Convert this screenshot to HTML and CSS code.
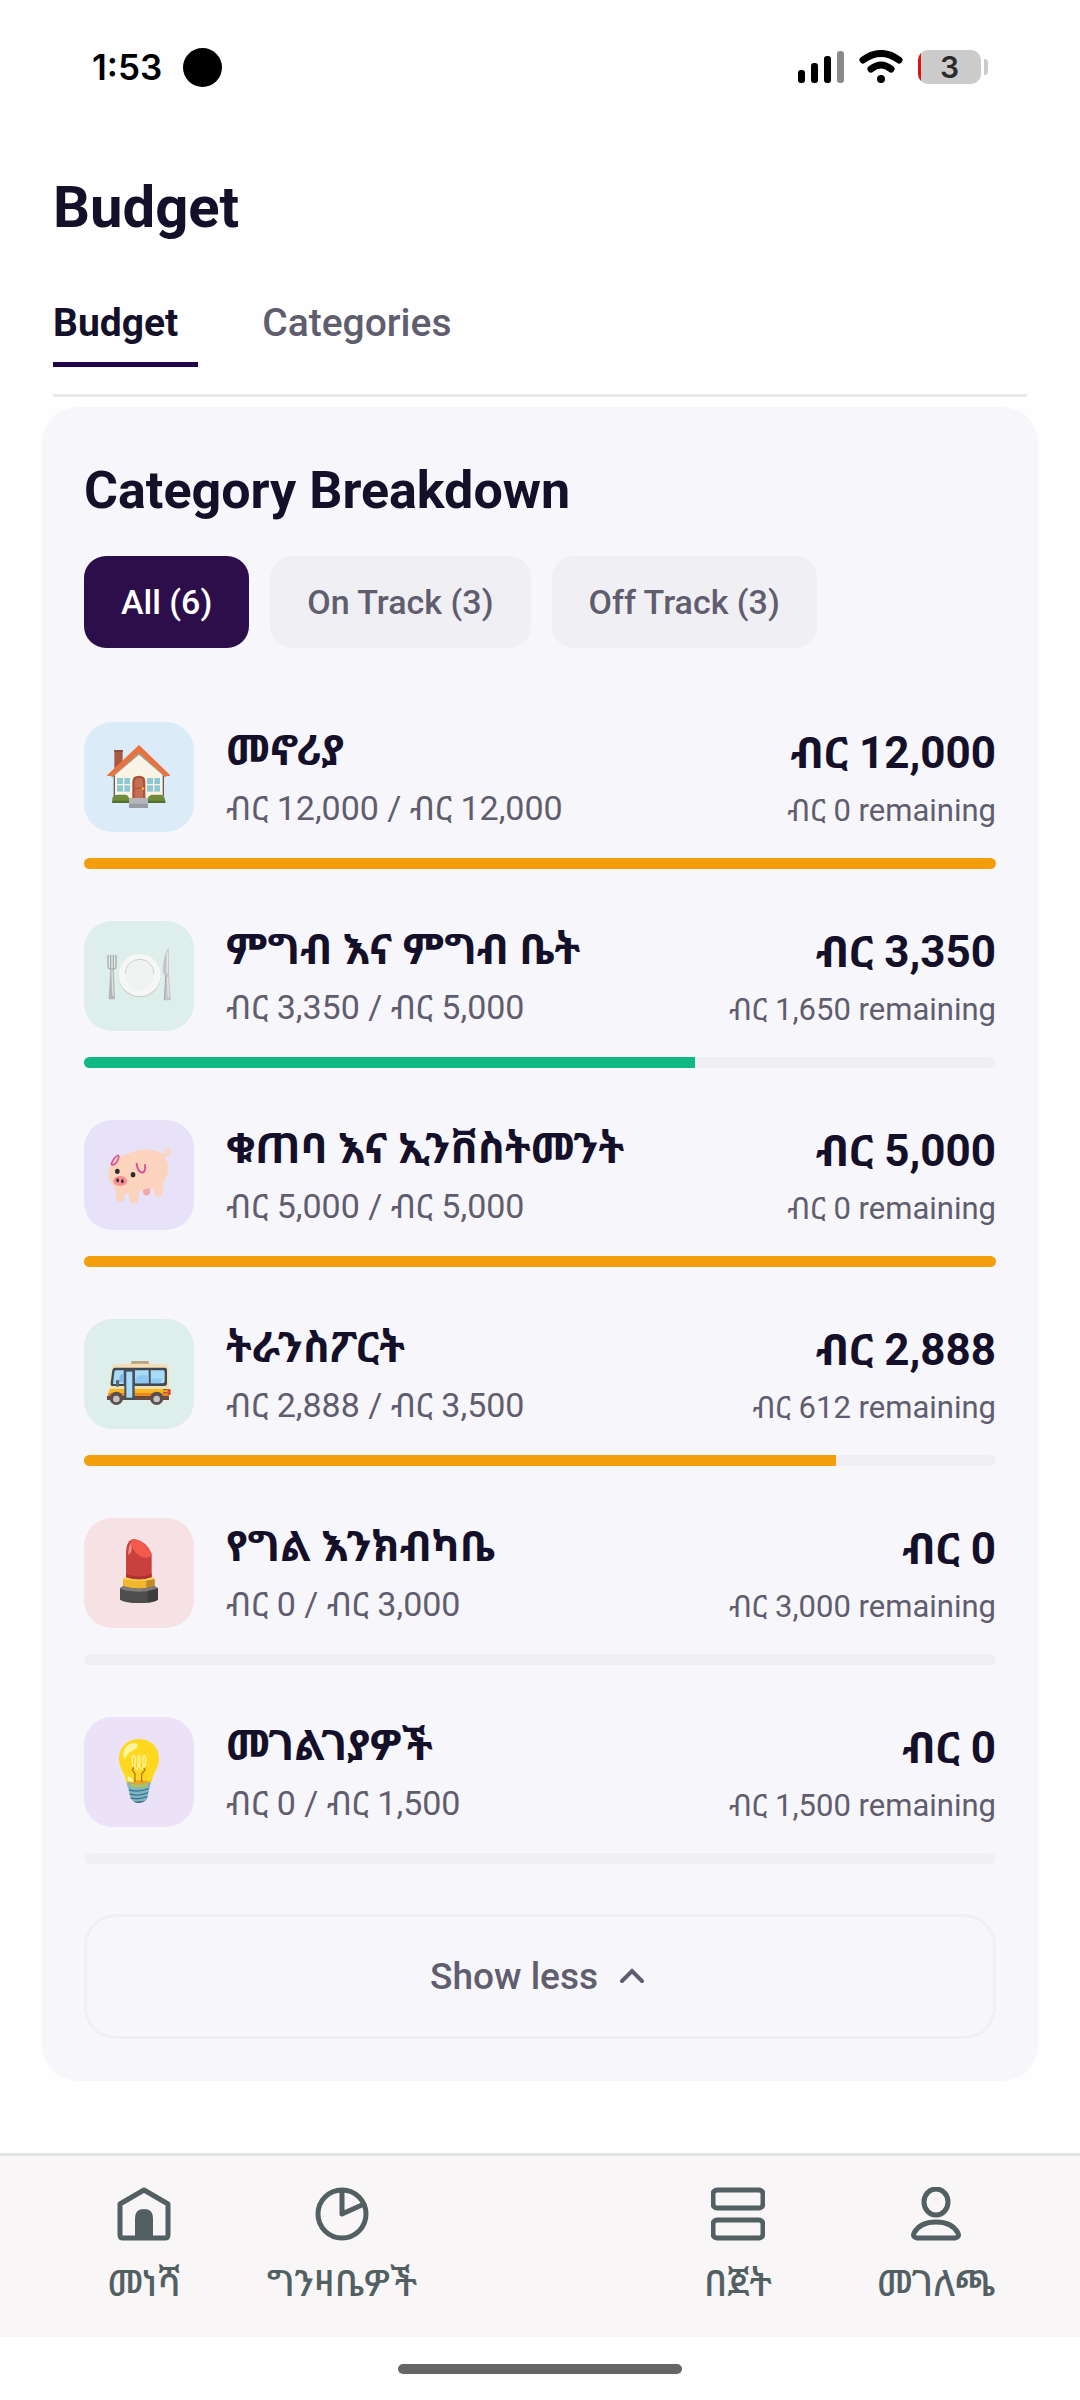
FILE: index.html
```html
<!DOCTYPE html>
<html lang="am">
<head>
<meta charset="UTF-8">
<meta name="viewport" content="width=device-width, initial-scale=1.0">
<title>Budget</title>
<link rel="stylesheet" href="styles.css">
</head>
<body>
<div class="status-bar">
  <div class="status-left">
    <span class="clock">1:53</span>
    <span class="camera"></span>
  </div>
  <div class="status-right">
    <svg class="signal" viewBox="0 0 46 34" aria-hidden="true">
      <rect x="0" y="20" width="7" height="13" rx="3"/>
      <rect x="13" y="13" width="7" height="20" rx="3"/>
      <rect x="26" y="6" width="7" height="27" rx="3"/>
      <rect x="39" y="1" width="7" height="32" rx="3" fill="#8a8a8a"/>
    </svg>
    <svg class="wifi" viewBox="0 0 44 34" aria-hidden="true">
      <path d="M4 10Q22 -3 40 10M12 19Q22 11 32 19" fill="none" stroke="#000" stroke-width="7" stroke-linecap="round"/>
      <circle cx="22" cy="29" r="4"/>
    </svg>
    <div class="battery"><span class="battery-level">3</span></div>
  </div>
</div>

<header class="page-header">
  <h1>Budget</h1>
  <nav class="tabs">
    <a class="tab active" href="#budget">Budget</a>
    <a class="tab" href="#categories">Categories</a>
  </nav>
</header>

<main class="card">
  <h2>Category Breakdown</h2>
  <div class="filters">
    <button class="chip active">All (6)</button>
    <button class="chip">On Track (3)</button>
    <button class="chip">Off Track (3)</button>
  </div>

  <ul class="category-list">
    <li class="category">
      <div class="category-row">
        <div class="tile blue">
          <svg viewBox="0 0 216 216" aria-hidden="true">
            <rect x="34" y="27" width="25" height="56" fill="#a75a41"/>
            <rect x="34" y="27" width="25" height="6" fill="#8f4a36"/>
            <path d="M34 90L108 22L181 90V177H34Z" fill="#faf4e6"/>
            <path d="M34 100V165M181 100V165" stroke="#6b5a52" stroke-width="4"/>
            <path d="M24 105L108 34L191 105" fill="none" stroke="#a89a88" stroke-width="11"/>
            <path d="M108 12L13 102V105H30L108 34L186 105H201V102Z" fill="#e9733f"/>
            <rect x="42" y="111" width="39" height="41" fill="#8ec9d3"/>
            <rect x="132" y="111" width="39" height="41" fill="#8ec9d3"/>
            <path d="M42 131H81M62 111V152M132 131H171M152 111V152" stroke="#faf4e6" stroke-width="4"/>
            <path d="M88 171V122Q88 104 108 104T127 122V171Z" fill="#a9513b"/>
            <path d="M95 171V124Q95 111 108 111T120 124V171Z" fill="#c66e54"/>
            <path d="M97 142H118" stroke="#a9513b" stroke-width="3"/>
            <circle cx="120" cy="143" r="4" fill="#f4b72b"/>
            <path d="M28 186V172Q30 161 44 161H68Q80 163 80 186Z" fill="#718a3b"/>
            <path d="M135 186V172Q137 161 150 161H174Q187 163 187 186Z" fill="#718a3b"/>
            <path d="M28 179H79V186H28ZM135 179H187V186H135Z" fill="#566f2b"/>
            <rect x="78" y="171" width="57" height="16" fill="#b5b6bb"/>
            <rect x="78" y="187" width="57" height="14" fill="#9b9ca3"/>
          </svg>
        </div>
        <div class="category-info">
          <h3>መኖሪያ</h3>
          <p>ብር 12,000 / ብር 12,000</p>
        </div>
        <div class="category-amount">
          <strong>ብር 12,000</strong>
          <span>ብር 0 remaining</span>
        </div>
      </div>
      <div class="track"><div class="fill orange" style="width: 100%"></div></div>
    </li>
    <li class="category">
      <div class="category-row">
        <div class="tile mint">
          <svg viewBox="0 0 216 216" aria-hidden="true">
            <path d="M15 46V78Q15 88 27 88T39 78V46M23 46V82M31 46V82" fill="none" stroke="#a9aaab" stroke-width="4" stroke-linecap="round"/>
            <path d="M22 84H32L36 178H17Z" fill="#b4b5b6"/>
            <path d="M27 90L30 168" stroke="#dedede" stroke-width="4"/>
            <circle cx="110" cy="109" r="63" fill="#cdd3d1"/>
            <circle cx="110" cy="105" r="63" fill="#f5f6f6"/>
            <circle cx="110" cy="106" r="43" fill="#eff2f1"/>
            <path d="M67 101A43 43 0 0 1 153 101" fill="none" stroke="#c9cdcc" stroke-width="3"/>
            <path d="M197 23Q181 42 179 92Q179 103 188 105L184 181H203L198 103Z" fill="#c4c5c6"/>
            <path d="M193 35V100M194 112L196 172" stroke="#e6e6e6" stroke-width="4"/>
            <path d="M188 105L184 181" stroke="#8f9192" stroke-width="2"/>
          </svg>
        </div>
        <div class="category-info">
          <h3>ምግብ እና ምግብ ቤት</h3>
          <p>ብር 3,350 / ብር 5,000</p>
        </div>
        <div class="category-amount">
          <strong>ብር 3,350</strong>
          <span>ብር 1,650 remaining</span>
        </div>
      </div>
      <div class="track"><div class="fill green" style="width: 67%"></div></div>
    </li>
    <li class="category">
      <div class="category-row">
        <div class="tile lilac">
          <svg viewBox="0 0 216 216" aria-hidden="true">
            <path d="M176 46Q194 54 196 36Q190 28 184 36Q182 48 194 52Q204 44 200 28" fill="none" stroke="#fcd3bd" stroke-width="5" stroke-linecap="round"/>
            <path d="M119 140H141V160Q139 170 130 170T120 160Z" fill="#f4a7a7"/>
            <path d="M40 54Q66 48 82 41Q124 24 168 38Q194 52 196 86Q195 110 182 126L179 164Q177 173 166 173T154 164L150 148Q128 148 108 158L105 186Q103 193 92 193T80 186L78 164H66L63 182Q61 188 51 188T40 180L37 146Q16 132 16 106Q18 84 30 70Z" fill="#fcd3bd"/>
            <path d="M25 76Q32 54 46 49Q50 52 42 68Q34 80 26 77" fill="none" stroke="#d9529b" stroke-width="5" stroke-linecap="round"/>
            <path d="M101 74Q104 100 118 101Q129 98 126 78" fill="none" stroke="#d9529b" stroke-width="6" stroke-linecap="round"/>
            <ellipse cx="43" cy="97" rx="7" ry="8" fill="#2c2c2c"/>
            <ellipse cx="90" cy="107" rx="7" ry="8" fill="#2c2c2c"/>
            <ellipse cx="52" cy="126" rx="21" ry="15" fill="#f48f96"/>
            <ellipse cx="44" cy="124" rx="4" ry="6" fill="#3a2529"/>
            <ellipse cx="58" cy="127" rx="4" ry="6" fill="#3a2529"/>
          </svg>
        </div>
        <div class="category-info">
          <h3>ቁጠባ እና ኢንቨስትመንት</h3>
          <p>ብር 5,000 / ብር 5,000</p>
        </div>
        <div class="category-amount">
          <strong>ብር 5,000</strong>
          <span>ብር 0 remaining</span>
        </div>
      </div>
      <div class="track"><div class="fill orange" style="width: 100%"></div></div>
    </li>
    <li class="category">
      <div class="category-row">
        <div class="tile mint">
          <svg viewBox="0 0 216 216" aria-hidden="true">
            <rect x="84" y="69" width="54" height="16" rx="5" fill="#b8a586"/>
            <path d="M34 80Q110 74 190 80Q198 84 198 100V184H14V160L20 150L26 92Q28 82 34 80Z" fill="#f4dfb4"/>
            <path d="M20 153H198V165H18Z" fill="#fbb522"/>
            <path d="M16 165H198V176H14Z" fill="#ea8a1c"/>
            <path d="M12 174H198V186H12Z" fill="#6a4a40"/>
            <path d="M36 89H186Q192 89 192 98V136Q192 144 184 144H28Q22 144 23 134L28 97Q29 89 36 89Z" fill="#3f4a50"/>
            <path d="M39 97H62V138H30L34 103Q35 97 39 97ZM96 97H137V136H96ZM143 97H181Q185 97 185 102V130Q185 136 180 136H143Z" fill="#a9daf7"/>
            <path d="M52 112L62 104V130L46 134Z" fill="#82b9e8"/>
            <path d="M96 126L106 112H137V136H96ZM146 122H178L170 136H143Z" fill="#8ec7f0"/>
            <rect x="64" y="94" width="31" height="92" fill="#45525a"/>
            <rect x="70" y="101" width="18" height="78" fill="#a9daf7"/>
            <rect x="39" y="126" width="9" height="20" rx="3" fill="#59666b"/>
            <path d="M180 155H194M180 163H194" stroke="#755b35" stroke-width="3"/>
            <rect x="194" y="153" width="9" height="18" rx="3" fill="#ef3b3b"/>
            <circle cx="40" cy="181" r="20" fill="#5b4f4c"/>
            <circle cx="40" cy="183" r="10" fill="#c3c3c3"/>
            <circle cx="161" cy="181" r="20" fill="#5b4f4c"/>
            <circle cx="161" cy="183" r="10" fill="#c3c3c3"/>
          </svg>
        </div>
        <div class="category-info">
          <h3>ትራንስፖርት</h3>
          <p>ብር 2,888 / ብር 3,500</p>
        </div>
        <div class="category-amount">
          <strong>ብር 2,888</strong>
          <span>ብር 612 remaining</span>
        </div>
      </div>
      <div class="track"><div class="fill orange" style="width: 82.5%"></div></div>
    </li>
    <li class="category">
      <div class="category-row">
        <div class="tile rose">
          <svg viewBox="0 0 216 216" aria-hidden="true">
            <path d="M69 50Q69 8 94 6Q130 12 146 50V120Q108 136 69 120Z" fill="#c9403f"/>
            <path d="M69 110Q108 126 146 110V122Q108 136 69 122Z" fill="#b03034"/>
            <path d="M92 7Q130 12 145 54Q138 66 116 60Q86 44 84 16Q86 8 92 7Z" fill="#f4594e"/>
            <path d="M84 16Q74 36 76 54Q88 46 86 30Z" fill="#f08e86"/>
            <path d="M60 126Q108 134 155 126V150Q108 164 60 150Z" fill="#f2b62d"/>
            <path d="M130 130L155 126V150L130 156Z" fill="#c08a2a"/>
            <path d="M60 126Q62 122 69 121Q108 134 146 121Q153 122 155 126Q108 138 60 126Z" fill="#ffd24f"/>
            <path d="M51 154L60 148Q108 162 155 148L165 154V188Q150 198 108 198T51 188Z" fill="#4d4d4d"/>
            <path d="M51 154L60 148Q108 162 155 148L165 154Q150 164 108 164T51 154Z" fill="#7c7c7c"/>
            <path d="M134 162L165 154V188Q155 194 134 197Z" fill="#3d3d3d"/>
          </svg>
        </div>
        <div class="category-info">
          <h3>የግል እንክብካቤ</h3>
          <p>ብር 0 / ብር 3,000</p>
        </div>
        <div class="category-amount">
          <strong>ብር 0</strong>
          <span>ብር 3,000 remaining</span>
        </div>
      </div>
      <div class="track"></div>
    </li>
    <li class="category">
      <div class="category-row">
        <div class="tile violet">
          <svg viewBox="0 0 216 216" aria-hidden="true">
            <path d="M108 9C72 9 48 34 48 68C48 98 66 108 70 138Q108 150 146 138C150 108 168 98 168 68C168 34 144 9 108 9Z" fill="#fdd81e"/>
            <path d="M62 66Q56 40 76 26Q98 16 104 26Q104 36 92 42Q76 48 70 62Q66 72 62 66Z" fill="#fff59b"/>
            <ellipse cx="108" cy="139" rx="35" ry="6" fill="#e8a81c"/>
            <path d="M96 138V114L88 102L92 94M116 138V114L126 102L122 94" fill="none" stroke="#b97520" stroke-width="4"/>
            <path d="M90 92Q84 56 93 58Q100 64 95 90Q102 110 106 90Q102 58 108 58Q115 64 109 90Q116 108 121 90Q118 58 124 58Q132 64 124 94" fill="none" stroke="#fff3a0" stroke-width="4"/>
            <path d="M74 120Q90 124 92 138Q76 138 74 132Z" fill="#fff59b"/>
            <path d="M70 139Q108 150 144 139L138 162L134 184Q130 200 108 201Q88 200 82 184L77 162Z" fill="#7fb6c6"/>
            <path d="M80 142Q108 150 136 142L132 152Q108 158 84 152Z" fill="#b9bf57"/>
            <path d="M78 162Q108 170 137 158M80 174Q108 182 135 170M83 186Q108 192 132 182" fill="none" stroke="#41778d" stroke-width="4"/>
            <path d="M90 194Q108 200 127 193Q120 201 108 201T90 194Z" fill="#3d6172"/>
          </svg>
        </div>
        <div class="category-info">
          <h3>መገልገያዎች</h3>
          <p>ብር 0 / ብር 1,500</p>
        </div>
        <div class="category-amount">
          <strong>ብር 0</strong>
          <span>ብር 1,500 remaining</span>
        </div>
      </div>
      <div class="track"></div>
    </li>
  </ul>

  <button class="show-less">
    Show less
    <svg viewBox="0 0 36 36" aria-hidden="true"><path d="M8 22L18 12L28 22"/></svg>
  </button>
</main>

<nav class="bottom-nav">
  <a class="nav-item" href="#home">
    <svg viewBox="0 0 54 54" aria-hidden="true">
      <path d="M3 17L27 3L51 17V48Q51 51 48 51H6Q3 51 3 48Z"/>
      <path class="solid" d="M18 51V31Q18 22 27 22T36 31V51Z"/>
    </svg>
    <span>መነሻ</span>
  </a>
  <a class="nav-item" href="#insights">
    <svg viewBox="0 0 54 54" aria-hidden="true">
      <circle cx="27" cy="27" r="24"/>
      <path d="M27 3V27L49 17"/>
    </svg>
    <span>ግንዛቤዎች</span>
  </a>
  <a class="nav-item nav-right" href="#budget">
    <svg viewBox="0 0 54 54" aria-hidden="true">
      <rect x="2" y="3" width="50" height="18" rx="4"/>
      <rect x="2" y="33" width="50" height="18" rx="4"/>
    </svg>
    <span>በጀት</span>
  </a>
  <a class="nav-item" href="#profile">
    <svg viewBox="0 0 54 54" aria-hidden="true">
      <ellipse cx="27" cy="15" rx="12" ry="13"/>
      <path d="M8 51H46Q51 50 49 46Q43 35 27 35T5 46Q3 50 8 51Z"/>
    </svg>
    <span>መገለጫ</span>
  </a>
</nav>
<div class="home-indicator"></div>
</body>
</html>
```
FILE: styles.css
```css
* {
    box-sizing: border-box;
}
body {
    margin: 0;
    font-family: Roboto, "Noto Sans Ethiopic", "Noto Sans", sans-serif;
    background-color: #fefefe;
    color: #14102a;
}
h1, h2, h3, p, ul {
    margin: 0;
    padding: 0;
}
a {
    color: inherit;
    text-decoration: none;
}
button {
    font-family: inherit;
    cursor: pointer;
}

/* status bar */
.status-bar {
    display: flex;
    justify-content: space-between;
    align-items: center;
    height: 134px;
    padding: 0 92px;
}
.status-left, .status-right {
    display: flex;
    align-items: center;
}
.status-left {
    gap: 21px;
}
.status-right {
    gap: 15px;
}
.clock {
    font-family: Inter, sans-serif;
    font-size: 35px;
    font-weight: 600;
    color: #000;
}
.camera {
    width: 39px;
    height: 39px;
    border-radius: 50%;
    background: #000;
}
.signal {
    width: 46px;
    height: 34px;
}
.wifi {
    width: 44px;
    height: 34px;
}
.battery {
    display: flex;
    align-items: center;
}
.battery-level {
    width: 63px;
    height: 34px;
    border-radius: 10px;
    background: linear-gradient(to right, #e01010 3px, #cbcbcb 3px);
    color: #2b2b2b;
    font: 600 30px/34px Inter, sans-serif;
    text-align: center;
}
.battery::after {
    content: "";
    width: 4px;
    height: 16px;
    margin-left: 3px;
    border-radius: 0 4px 4px 0;
    background: #cbcbcb;
}

/* header */
.page-header {
    padding: 40px 53px 0;
}
h1 {
    font-size: 58px;
    line-height: 66px;
    font-weight: 700;
}
.tabs {
    display: flex;
    gap: 64px;
    margin-top: 60px;
    padding-bottom: 27px;
    border-bottom: 3px solid #e9e9ec;
}
.tab {
    padding-bottom: 16px;
    border-bottom: 5px solid transparent;
    color: #5f5d6e;
    font-size: 39px;
    line-height: 46px;
    font-weight: 500;
}
.tab.active {
    padding-right: 20px;
    border-color: #22054a;
    color: #14102a;
    font-weight: 700;
}

/* category card */
.card {
    margin: 10px 42px 0;
    padding: 52px 42px 42px;
    border-radius: 36px;
    background: #f7f6fb;
}
h2 {
    font-size: 52px;
    line-height: 64px;
    font-weight: 700;
}
.filters {
    display: flex;
    gap: 21px;
    margin-top: 33px;
}
.chip {
    height: 92px;
    padding: 0 37px;
    border: none;
    border-radius: 22px;
    background: #f0eff4;
    color: #5f5d6e;
    font-size: 34px;
    font-weight: 500;
}
.chip.active {
    background: #2c0e4b;
    color: #fff;
}
.category-list {
    display: flex;
    flex-direction: column;
    gap: 52px;
    margin-top: 74px;
    list-style: none;
}
.category-row {
    display: flex;
    align-items: center;
    height: 110px;
}
.tile {
    display: flex;
    align-items: center;
    justify-content: center;
    width: 110px;
    height: 110px;
    margin-right: 32px;
    border-radius: 28px;
}
.tile svg {
    width: 72px;
    height: 72px;
}
.tile.blue { background: #dcebf8; }
.tile.mint { background: #deeeeb; }
.tile.lilac { background: #e8e2f9; }
.tile.rose { background: #f6e1e5; }
.tile.violet { background: #ebe2f8; }
.category-info {
    flex: 1;
    padding-top: 6px;
}
.category-info h3 {
    font-size: 42px;
    line-height: 56px;
    font-weight: 700;
}
.category-info p {
    color: #5f5d6e;
    font-size: 34px;
    line-height: 58px;
}
.category-amount {
    padding-top: 8px;
    text-align: right;
}
.category-amount strong {
    display: block;
    font-size: 44px;
    line-height: 60px;
    font-weight: 700;
}
.category-amount span {
    display: block;
    color: #5f5d6e;
    font-size: 31px;
    line-height: 56px;
}
.track {
    height: 11px;
    margin-top: 26px;
    border-radius: 6px;
    background: #f0eff4;
    overflow: hidden;
}
.fill {
    height: 100%;
}
.fill.orange { background: #f59e0b; }
.fill.green { background: #10b981; }
.show-less {
    display: flex;
    align-items: center;
    justify-content: center;
    gap: 16px;
    width: 100%;
    height: 125px;
    margin-top: 50px;
    border: 3px solid #f0eff1;
    border-radius: 32px;
    background: none;
    color: #5f5d6e;
    font-size: 37px;
    font-weight: 500;
}
.show-less svg {
    width: 36px;
    height: 36px;
    fill: none;
    stroke: #5f5d6e;
    stroke-width: 4;
    stroke-linecap: round;
}

/* bottom navigation */
.bottom-nav {
    display: grid;
    grid-template-columns: repeat(5, 1fr);
    height: 184px;
    margin-top: 72px;
    padding: 31px 45px 0;
    border-top: 3px solid #dfe4e4;
    background: #f8f6f7;
}
.nav-item {
    display: flex;
    flex-direction: column;
    align-items: center;
    gap: 18px;
    color: #536063;
    font-size: 37px;
    line-height: 50px;
    font-weight: 500;
}
.nav-right {
    grid-column: 4;
}
.nav-item svg {
    width: 54px;
    height: 54px;
    fill: none;
    stroke: #536063;
    stroke-width: 5;
    stroke-linejoin: round;
}
.nav-item .solid {
    fill: #536063;
    stroke: none;
}
.home-indicator {
    width: 284px;
    height: 10px;
    margin: 27px auto 26px;
    border-radius: 5px;
    background: #666;
}
```
